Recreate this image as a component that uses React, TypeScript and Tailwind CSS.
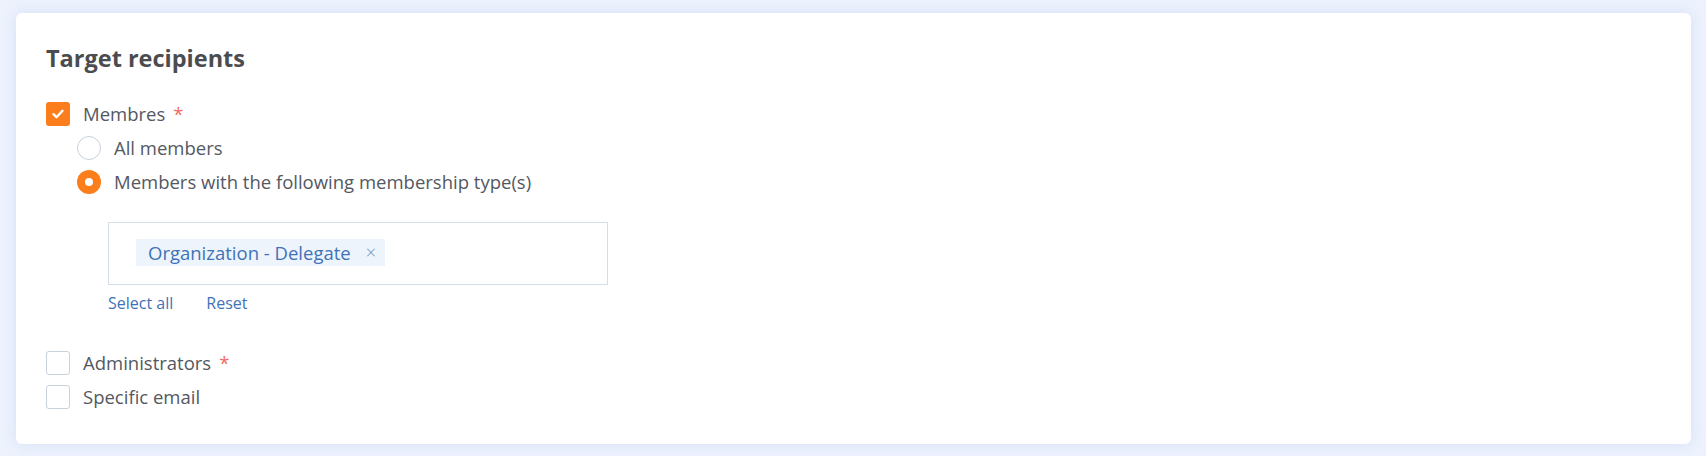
import { useState } from "react";

const FONT = { fontFamily: "'Open Sans', 'Noto Sans', sans-serif" };

function Checkbox({ checked }: { checked: boolean }) {
  return checked ? (
    <span className="flex h-6 w-6 items-center justify-center rounded-[3px] bg-[#fb7d1b]">
      <svg width="12" height="10" viewBox="0 0 12 10" fill="none">
        <path
          d="M1.5 5.2l3 3 6-6.4"
          stroke="white"
          strokeWidth="2.4"
          strokeLinecap="round"
          strokeLinejoin="round"
        />
      </svg>
    </span>
  ) : (
    <span className="h-6 w-6 rounded-[3px] border border-[#c9d1de] bg-white" />
  );
}

function Radio({ checked }: { checked: boolean }) {
  return checked ? (
    <span className="flex h-6 w-6 items-center justify-center rounded-full bg-[#fb7d1b]">
      <span className="h-2 w-2 rounded-full bg-white" />
    </span>
  ) : (
    <span className="h-6 w-6 rounded-full border border-[#c9d1de] bg-white" />
  );
}

function Required() {
  return <span className="ml-2 text-[#f36a63]">*</span>;
}

export default function App() {
  const [members, setMembers] = useState(true);
  const [mode, setMode] = useState<"all" | "types">("types");

  return (
    <div className="min-h-screen bg-[#edf2fd] pb-3 pl-4 pr-[15px] pt-[13px]" style={FONT}>
      <div className="h-[431px] rounded-md bg-white pl-[30px] pt-[29px] shadow-[0_0_14px_rgba(170,190,235,0.35)]">
        <h2 className="text-[23.5px] font-bold leading-8 text-[#4b4c4f]">Target recipients</h2>

        <div className="mt-[23px] text-[18.5px] text-[#545862]">
          <label className="flex h-[34px] items-center" onClick={() => setMembers(!members)}>
            <Checkbox checked={members} />
            <span className="ml-[13px]">Membres</span>
            <Required />
          </label>

          <div className="pl-[31px]">
            <label className="flex h-[34px] items-center" onClick={() => setMode("all")}>
              <Radio checked={mode === "all"} />
              <span className="ml-[13px]">All members</span>
            </label>
            <label className="flex h-[34px] items-center" onClick={() => setMode("types")}>
              <Radio checked={mode === "types"} />
              <span className="ml-[13px]">Members with the following membership type(s)</span>
            </label>
          </div>

          <div className="ml-[62px] mt-[23px]">
            <div className="h-[63px] w-[500px] border border-[#d5dde9] pl-[27px] pt-4">
              <span className="inline-flex h-[27px] items-center bg-[#eef4fc] pl-3 pr-[9px] text-[18.5px] text-[#3f72b6]">
                Organization - Delegate
                <span className="ml-[15px] text-[18px] font-light text-[#6d8fbd]">×</span>
              </span>
            </div>
            <div className="mt-[6px] flex gap-[33px] text-[16px] text-[#3f72b6]">
              <a href="#">Select all</a>
              <a href="#">Reset</a>
            </div>
          </div>

          <div className="mt-[31px]">
            <label className="flex h-[34px] items-center">
              <Checkbox checked={false} />
              <span className="ml-[13px]">Administrators</span>
              <Required />
            </label>
            <label className="flex h-[34px] items-center">
              <Checkbox checked={false} />
              <span className="ml-[13px]">Specific email</span>
            </label>
          </div>
        </div>
      </div>
    </div>
  );
}
